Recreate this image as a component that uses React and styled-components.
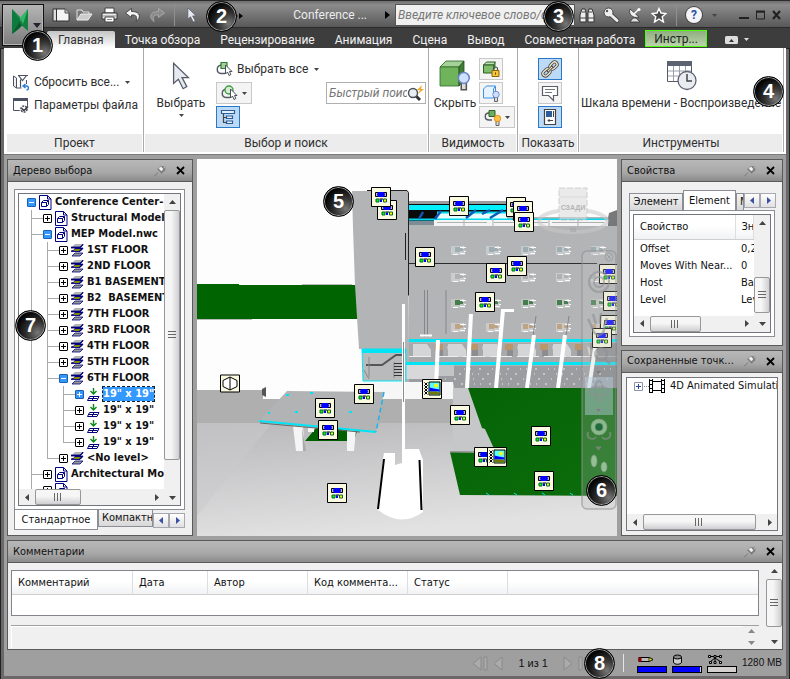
import { useState } from "react";
import styled, { createGlobalStyle, css } from "styled-components";

const UI = `Roboto, "Noto Sans", sans-serif`;
const TAHOMA = `"DejaVu Sans Condensed", "DejaVu Sans", sans-serif`;

/* ---------- small shared parts ---------- */

const Callout = ({ n, ...pos }) => <CalloutDot {...pos}>{n}</CalloutDot>;

const Caret = ({ light }) => (
    <svg width="5" height="3" viewBox="0 0 5 3" aria-hidden="true">
        <path d="M0 0h5L2.500 3z" fill={light ? "#ddd" : "#444"} />
    </svg>
);

const Arrow = ({ dir, color = "#444", label }) => {
    const d = {
        up: "M1 6h7L4.500 2z",
        down: "M1 3h7L4.500 7z",
        left: "M6 1v7L2 4.500z",
        right: "M3 1v7L7 4.500z",
    }[dir];
    return (
        <ArrowBtn type="button" aria-label={label || dir}>
            <svg width="9" height="9" viewBox="0 0 9 9"><path d={d} fill={color} /></svg>
        </ArrowBtn>
    );
};

const VScroll = ({ before, size, after }) => (
    <VTrack>
        <Arrow dir="up" />
        <Gap $grow={before} />
        <VThumb $grow={size}><Grip /></VThumb>
        <Gap $grow={after} />
        <Arrow dir="down" />
    </VTrack>
);

const HScroll = ({ before, size, after }) => (
    <HTrack>
        <Arrow dir="left" />
        <Gap $grow={before} />
        <HThumb $grow={size}><Grip $vertical /></HThumb>
        <Gap $grow={after} />
        <Arrow dir="right" />
    </HTrack>
);

const Panel = ({ title, children }) => (
    <PanelBox>
        <PanelHead>
            <PanelTitle>{title}</PanelTitle>
            <HeadBtn type="button" aria-label="Закрепить">
                <svg width="12" height="12" viewBox="0 0 12 12">
                    <path d="M0 11.500l4-4" stroke="#777" />
                    <path d="M3 4l5 5 1-2 2-1 .5-3.500L10 1 6 1.500 5 3z" fill="#7d7d7d" />
                    <path d="M5 3.500l2-1.500 2 2-1.500 2zM9.500 2l1.500 1" fill="#f4f4f4" stroke="#f4f4f4" strokeWidth=".6" />
                </svg>
            </HeadBtn>
            <HeadBtn type="button" aria-label="Закрыть">
                <svg width="9" height="9" viewBox="0 0 9 9">
                    <path d="M1 1l7 7M8 1L1 8" stroke="#000" strokeWidth="1.800" />
                </svg>
            </HeadBtn>
        </PanelHead>
        {children}
    </PanelBox>
);

/* ---------- title bar icons ---------- */

const LogoIcon = () => (
    <svg width="40" height="40" viewBox="0 0 40 40">
        <path d="M9 4l8 8v11l-8 6z" fill="#0d7a3e" />
        <path d="M9 4l15 20V5l-6 9z" fill="#1e9b50" />
        <path d="M9 29l8-13 3 4z" fill="#0a5c30" />
        <path d="M25 4v22l-8-7 1-6z" fill="#14803f" />
        <path d="M25 4l-8 9 3 6z" fill="#2fb866" />
        <path d="M30 18h8l-4 5z" fill="#223" />
    </svg>
);

const NewIcon = () => (
    <svg width="18" height="14" viewBox="0 0 18 14">
        <path d="M1 1h4v12H1z" fill="#ddd" stroke="#333" />
        <path d="M4.500 1h9l3.500 4v8H4.500z" fill="#f4f4f4" stroke="#333" />
        <path d="M13 1v4h4" fill="#bbb" stroke="#555" />
    </svg>
);
const OpenIcon = () => (
    <svg width="18" height="14" viewBox="0 0 18 14">
        <path d="M1 12V2h5l1 2h6v2" fill="#777" stroke="#e4e4e4" />
        <path d="M1 12l4-6h11l-4 6z" fill="#ccc" stroke="#eee" />
    </svg>
);
const PrintIcon = () => (
    <svg width="17" height="16" viewBox="0 0 17 16">
        <path d="M4 1h9v5H4z" fill="#fff" stroke="#444" />
        <path d="M1 6h15v6H1z" fill="#ececec" stroke="#333" />
        <path d="M2 9h13" stroke="#888" />
        <path d="M4 10h9v5H4z" fill="#fff" stroke="#444" />
        <path d="M6 12.500h5" stroke="#888" />
    </svg>
);
const UndoIcon = ({ flip, dim }) => (
    <svg width="16" height="14" viewBox="0 0 16 14">
        <path
            transform={flip ? "matrix(-1 0 0 1 16 0)" : undefined}
            d="M6.500.500L.5 5l6 4.500V7c5-.5 6 2 4.500 6.500 5-3.500 5-10-4.500-10z"
            fill={dim ? "#8b8b8b" : "#f4f4f4"}
            stroke={dim ? "#b0b0b0" : "#333"}
            strokeWidth=".8"
        />
    </svg>
);
const Pointer = ({ w = 10, h = 16, line = "#555b68" }) => (
    <svg width={w} height={h} viewBox="0 0 17 27">
        <path d="M1.500 1.500v19l4.500-4 4.500 9 3.500-2-4.500-8.500h6z" fill="#e6e9ef" stroke={line} strokeWidth="1.200" />
    </svg>
);
const BinocularsIcon = () => (
    <svg width="16" height="15" viewBox="0 0 16 15">
        <path d="M3 1h3l1 4v9H1V7zM10 1h3l2 6v7H9V5z" fill="#eee" stroke="#333" />
        <path d="M1 10h6M9 10h6M7 6h2M3 4h3M10 4h3" stroke="#444" />
    </svg>
);
const KeyIcon = () => (
    <svg width="17" height="17" viewBox="0 0 17 17">
        <path d="M8 8l6 5.500" stroke="#444" strokeWidth="4.500" strokeLinecap="round" />
        <circle cx="5.500" cy="5.500" r="4.500" fill="#eee" stroke="#444" />
        <path d="M8 8l6 5.500" stroke="#eee" strokeWidth="3" strokeLinecap="round" />
        <circle cx="4" cy="4" r="1.200" fill="#555" />
    </svg>
);
const DishIcon = () => (
    <svg width="16" height="16" viewBox="0 0 16 16">
        <path d="M3 2c-2 5 3 10 9 8z" fill="#eee" stroke="#333" strokeWidth=".8" />
        <path d="M7 7l5-5" stroke="#fff" strokeWidth="1.500" />
        <circle cx="12" cy="2.500" r="1.500" fill="#fff" />
        <path d="M6 11l-3 4h10l-4-4z" fill="#ddd" stroke="#333" strokeWidth=".8" />
    </svg>
);
const StarIcon = () => (
    <svg width="16" height="16" viewBox="0 0 16 16">
        <path d="M8 1.500l2 4.500 5 .5-3.800 3.200L12.500 15 8 12l-4.500 3 1.300-5.300L1 6.500 6 6z" fill="#4a4a4a" stroke="#fff" strokeWidth="1.400" />
    </svg>
);

/* ---------- ribbon icons ---------- */

const ResetIcon = () => (
    <svg width="18" height="17" viewBox="0 0 18 17">
        <path d="M1.500 2v10l3 2V4zM4.500 14h5M14.500 6v4" fill="#eef0f4" stroke="#4a5160" />
        <path d="M6.500 1.500l4 5 4-5M6 1.500h10M8.500 5.500v8" fill="none" stroke="#4a5160" strokeWidth="1.200" />
        <path d="M13.500 10l-2.500 2 2.500 2M11.500 12h3c2.500 0 2.500 4 0 4" fill="none" stroke="#2a7fd4" strokeWidth="1.400" />
    </svg>
);
const FileOptIcon = () => (
    <svg width="18" height="17" viewBox="0 0 18 17">
        <path d="M1.500 1.500h14v12h-14z" fill="#fff" stroke="#4a5160" />
        <path d="M1 1h15v3H1z" fill="#4a5160" />
        <circle cx="12" cy="12" r="4.500" fill="#fff" />
        <circle cx="12" cy="12" r="3" fill="#fff" stroke="#4a5160" strokeWidth="1.600" strokeDasharray="2 1" />
        <path d="M10 11.500l2 2 4-4" fill="none" stroke="#333" strokeWidth="1.400" />
    </svg>
);
const PickIcon = ({ round }) => (
    <svg width="17" height="16" viewBox="0 0 17 16">
        <path d="M5 4C0 5 0 12 5 12.500h4" fill="none" stroke="#555b66" strokeWidth="1.400" />
        {round
            ? <circle cx="8" cy="5" r="4" fill="#d8ecd0" stroke="#3f9a48" strokeWidth="1.400" />
            : <path d="M5 1.500h6v6H5z" fill="#a5cf95" stroke="#2d7a32" strokeWidth="1.200" />}
        <path d="M9.500 4v9l2-2 1.500 3.500 1.800-1-1.300-3H16z" fill="#fff" stroke="#3a3f4a" strokeWidth=".9" />
    </svg>
);
const TreeIcon = () => (
    <svg width="16" height="16" viewBox="0 0 16 16">
        <path d="M1.500 1.500h13v3h-13zM6.500 7h6v2.500h-6zM6.500 12h6v2.500h-6z" fill="#e4f0fc" stroke="#2a5d99" strokeWidth="1.200" />
        <path d="M3.500 5v8.500h3M3.500 8.500h3" fill="none" stroke="#444" strokeWidth="1.200" />
    </svg>
);
const Bulb = ({ x, y, s = 1, fill = "#cfe0ff", stroke = "#6a86c4" }) => (
    <g transform={`translate(${x} ${y}) scale(${s})`}>
        <path d="M2.500 6h3v4.500h-3z" fill="#ddd" stroke="#555" strokeWidth=".9" />
        <circle cx="4" cy="3.500" r="3.200" fill={fill} stroke={stroke} strokeWidth=".9" />
    </g>
);
const HideIcon = () => (
    <svg width="32" height="32" viewBox="0 0 32 32">
        <path d="M1 7l6-6h18l-5 6z" fill="#a4d195" stroke="#2c5f26" strokeWidth=".8" />
        <path d="M1 7h19v19H1z" fill="#6fb35b" stroke="#2f6a2a" strokeWidth=".8" />
        <path d="M20 7l5-6v19l-5 6z" fill="#3f7e34" stroke="#234f1e" strokeWidth=".8" />
        <Bulb x={18} y={12} s={1.7} />
    </svg>
);
const LockCubeIcon = () => (
    <svg width="18" height="17" viewBox="0 0 18 17">
        <path d="M1.500 4l3-3h9l-2 3z" fill="#bfe0b4" stroke="#2c5f26" />
        <path d="M1.500 4h10v8h-10z" fill="#7fbd6c" stroke="#2c5f26" />
        <path d="M11.500 4l2-3v6l-2 3z" fill="#3f7e34" />
        <path d="M11.500 9V7.500c0-2 4-2 4 0V9" fill="none" stroke="#555" strokeWidth="1.200" />
        <path d="M10 9.500h7v6h-7z" fill="#f4c536" stroke="#8a6510" />
        <path d="M13.500 11.500v2" stroke="#5a3f00" />
    </svg>
);
const GhostCubeIcon = () => (
    <svg width="18" height="17" viewBox="0 0 18 17">
        <path d="M1.500 4l3-3h9l-2 3v9h-10zM13.500 1v6" fill="#e6f2fd" stroke="#3a93e0" />
        <Bulb x={10} y={6} />
    </svg>
);
const ShowAllIcon = () => (
    <svg width="18" height="17" viewBox="0 0 18 17">
        <path d="M5 4C0 4 0 11 5 11h3" fill="none" stroke="#555b66" strokeWidth="1.400" />
        <path d="M5 1.500h6v6H5z" fill="#6fae5e" stroke="#2c5f26" />
        <Bulb x={9.500} y={6} fill="#ffc445" stroke="#e58a12" />
    </svg>
);
const LinkIcon = () => (
    <svg width="18" height="18" viewBox="0 0 18 18">
        <g transform="rotate(-45 9 9)" fill="none">
            <g stroke="#444" strokeWidth="3">
                <rect x="0" y="6.500" width="8" height="5" rx="2.500" />
                <rect x="10" y="6.500" width="8" height="5" rx="2.500" />
            </g>
            <g stroke="#f0e6c8" strokeWidth="1.400">
                <rect x="0" y="6.500" width="8" height="5" rx="2.500" />
                <rect x="10" y="6.500" width="8" height="5" rx="2.500" />
            </g>
            <path d="M5 9h8" stroke="#444" strokeWidth="2.500" />
            <path d="M6 9h6" stroke="#f0e6c8" />
        </g>
    </svg>
);
const NoteIcon = () => (
    <svg width="18" height="17" viewBox="0 0 18 17">
        <path d="M1.500 1.500h15v9h-4v5l-5-5h-6z" fill="#fff" stroke="#5a5f68" strokeWidth="1.200" />
        <path d="M4 4.500h10M4 7.500h7" stroke="#777" />
    </svg>
);
const PropsIcon = () => (
    <svg width="16" height="18" viewBox="0 0 16 18">
        <path d="M2.500 1.500h11v15h-11z" fill="#fff" stroke="#444" strokeWidth="1.200" />
        <path d="M4 3h6v6H4z" fill="#2a5d99" />
        <path d="M11.500 3v6M6 12.500h5M7.500 11L6 12.500 7.500 14" fill="none" stroke="#444" />
    </svg>
);
const TimelineIcon = () => (
    <svg width="32" height="32" viewBox="0 0 32 32">
        <path d="M2.500 2.500h24v19h-24z" fill="#fff" stroke="#555b66" />
        <path d="M2 1h25v5H2z" fill="#5c6270" />
        <path d="M3 11h23M3 16h23M8.500 6v15M14.500 6v15M20.500 6v15" stroke="#9aa0aa" />
        <circle cx="22" cy="20.500" r="9" fill="#e9edf2" stroke="#5c6270" strokeWidth="1.300" />
        <path d="M22 14v7h5" fill="none" stroke="#444" strokeWidth="1.500" />
    </svg>
);
const SearchIcon = () => (
    <svg width="18" height="17" viewBox="0 0 18 17">
        <path d="M9 11l4 4" stroke="#333" strokeWidth="3" />
        <circle cx="6" cy="8" r="4.500" fill="#e8eef4" stroke="#4a4f58" strokeWidth="1.400" />
        <path d="M15 0l-5 5h3l-2 4 6-5h-3z" fill="#f5a623" />
    </svg>
);

/* ---------- selection tree ---------- */

const ModelIcon = () => (
    <svg width="13" height="15" viewBox="0 0 13 15">
        <path d="M.5.500h8l3.500 3.500v10.500H.5z" fill="#fff" stroke="#000080" />
        <path d="M8.500.500V4H12" fill="none" stroke="#000080" />
        <path d="M2.500 7.500h5v4h-5zM2.500 7.500l2-2h5v4l-2 2M7.500 7.500l2-2" fill="none" stroke="#000080" />
    </svg>
);
const LayerIcon = () => (
    <svg width="13" height="14" viewBox="0 0 13 14">
        <path d="M4 1h8L9 4H1z" fill="#b5b5b5" />
        <path d="M0 4h9l3-3v1L9 5H0zM0 8h9l3-3H4v1M0 8.500h9l3-3" fill="#000080" stroke="#000080" strokeWidth=".8" />
        <path d="M4 6h6L8 8H2z" fill="#8a8a00" />
        <path d="M4 10h8l-3 3H1z" fill="#999" stroke="#000080" strokeWidth=".8" />
    </svg>
);
const TerminalIcon = () => (
    <svg width="13" height="15" viewBox="0 0 13 15">
        <path d="M6.500 1v6M3.500 4l3 3 3-3" fill="none" stroke="#0a8a1a" strokeWidth="1.400" />
        <path d="M.5 13.500l2-4h9.500l-2 4zM1.500 11.500h9M7 9.500l-2 4" fill="none" stroke="#000080" />
    </svg>
);
const kinds = { model: ModelIcon, layer: LayerIcon, terminal: TerminalIcon };

const floor = (name) => ({ name, kind: "layer" });
const treeData = [
    {
        name: "Conference Center-", kind: "model", open: true, children: [
            { name: "Structural Model", kind: "model" },
            {
                name: "MEP Model.nwc", kind: "model", open: true, children: [
                    floor("1ST FLOOR"), floor("2ND FLOOR"), floor("B1 BASEMENT"), floor("B2  BASEMENT"),
                    floor("7TH FLOOR"), floor("3RD FLOOR"), floor("4TH FLOOR"), floor("5TH FLOOR"),
                    {
                        name: "6TH FLOOR", kind: "layer", open: true, children: [
                            { name: '19" x 19"', kind: "terminal", selected: true },
                            { name: '19" x 19"', kind: "terminal" },
                            { name: '19" x 19"', kind: "terminal" },
                            { name: '19" x 19"', kind: "terminal" },
                        ],
                    },
                    floor("<No level>"),
                ],
            },
            { name: "Architectural Mo", kind: "model" },
            { name: "", kind: "model" },
        ],
    },
];

const TreeNode = ({ node }) => {
    const Icon = kinds[node.kind];
    const [open, setOpen] = useState(!!node.open);
    return (
        <Item>
            <Row>
                <Expander
                    type="button"
                    aria-label={open ? "Свернуть" : "Развернуть"}
                    $blue={open || node.selected}
                    onClick={() => setOpen(!open)}
                >
                    <svg width="7" height="7" viewBox="0 0 7 7">
                        <path d={open ? "M1 3.500h5" : "M1 3.500h5M3.500 1v5"} stroke={open || node.selected ? "#fff" : "#000"} />
                    </svg>
                </Expander>
                <Icon />
                <Label $selected={node.selected}>{node.name}</Label>
            </Row>
            {open && node.children && (
                <Branch>{node.children.map((c, i) => <TreeNode key={i} node={c} />)}</Branch>
            )}
        </Item>
    );
};

/* ---------- 3D view ---------- */

const Marker = ({ x, y }) => (
    <g transform={`translate(${x - 9.5} ${y - 9.5})`}>
        <path d="M0 0h19v19H0z" fill="#fafae0" stroke="#000" />
        <path d="M4 5h11v4H4z" fill="#b8b8c8" stroke="#000" />
        <path d="M6.500 4.500h6l1 2.500-1 2.500h-6l-1-2.500z" fill="#00f" />
        <path d="M8.500 12h2v2.500h-2z" fill="#00f" />
        <path d="M8 11.500h3.500" stroke="#000" />
        <path d="M4.500 11.500h3v3h-3z" fill="#0f0" stroke="#063" />
        <path d="M12 11.500h3v3h-3z" fill="#ff0" stroke="#063" />
    </g>
);
const ViewMarker = ({ x, y }) => (
    <g transform={`translate(${x - 9.5} ${y - 9.5})`}>
        <path d="M0 0h19v19H0z" fill="#fafae0" stroke="#000" />
        <path d="M2 3l3 3-3 3 3 3-3 3M5 3L2 6l3 3-3 3 3 3" fill="none" stroke="#000" />
        <path d="M6.500 2.500h11v13h-11z" fill="#5ff" stroke="#000" />
        <path d="M7 8l4 1 6 1v2H7z" fill="#00f" />
        <path d="M7 12h7l3 1v2H7z" fill="#770" />
        <circle cx="13.500" cy="6" r="2" fill="#ff0" />
    </g>
);

const markers = [
    [387, 210], [381, 197], [459, 206], [516, 207], [523, 211], [524, 222], [425, 257], [517, 266],
    [496, 273], [485, 302], [609, 274], [613, 301], [610, 325], [602, 338], [364, 394], [325, 408],
    [328, 430], [460, 415], [541, 436], [484, 457], [544, 481], [337, 493],
];
const mullions = [[438, 436, 340], [471, 467, 314], [503, 496, 310], [534, 527, 335], [565, 558, 335], [597, 589, 335]];
const windowRows = [
    { y: 246, fill: "#cdd1d3", tint: "#8fa3a8" },
    { y: 273, fill: "#d2d4d4", tint: "#a4a8aa" },
    { y: 299, fill: "#c6cac6", tint: "#1c6428" },
    { y: 323, fill: "#cfcfcf", tint: "#b9966c" },
];
const windowCols = [451, 486, 521, 556, 591];

const Scene = () => (
    <SceneSvg viewBox="197 159 420 377" preserveAspectRatio="xMinYMin slice" role="img" aria-label="Conference Center">
        <defs>
            <linearGradient id="ground" x1="0" y1="0" x2="0.300" y2="1">
                <stop offset="0" stopColor="#b8b8ba" />
                <stop offset="1" stopColor="#e2e2e3" />
            </linearGradient>
            <linearGradient id="lawn" x1="0" y1="0" x2="1" y2="1">
                <stop offset="0" stopColor="#056305" />
                <stop offset="1" stopColor="#0c6d0c" />
            </linearGradient>
        </defs>
        <path d="M197 159h420v377H197z" fill="#fdfdfd" />
        <path d="M197 422h420v114H197z" fill="url(#ground)" />
        <path d="M197 390h66v9h190v24H197z" fill="#afafaf" />
        <path d="M197 516l75-93h-75z" fill="#c9c9cb" opacity=".5" />
        <path d="M262 389l4-2v10l-4-2z" fill="#555" />
        <path d="M197 284h42v1h117l2 34H197z" fill="#006400" />
        <path d="M197 319.500h55M302 284.500h50" stroke="#bbb" />

        {/* building wall */}
        <path d="M409 201h208v187H404V340h5z" fill="#b3b4b6" />
        <path d="M506 200h111v17H506z" fill="#fdfdfd" />
        <path d="M608 218l1-5 8-3v16h-10z" fill="#77787a" />
        <path d="M409 203h97v22h-97z" fill="#0a0a0a" />
        <path d="M409 201h97v3h-97z" fill="#9a9b9d" />
        <path d="M409 205h105v5H409z" fill="#00f0ff" />
        <path d="M437 213h70v6h-70z" fill="#e8fbff" />
        <path d="M437 212.500h70M409 219.500h198" stroke="#00d8ee" strokeWidth="2" />
        <path d="M419 219l4-7M435 219l6-8M466 218l10-8M482 214l8-4M490 218l13-8M514 218v8" fill="none" stroke="#0a5cb8" strokeWidth="2.500" />
        <path d="M409 221h25v4h-25z" fill="#7e8c96" />
        <path d="M434 220h174v6H434z" fill="#f4f4f4" />
        <path d="M437 222.500h50M494 222.500h54M552 222.500h52M464 219v7M493 219v7M549 219v7M578 219v7" stroke="#b0b0b0" />
        <path d="M409 263.500h188" stroke="#2b2b2b" />
        {windowRows.map((r, j) => windowCols.map((x, i) => (
            <g key={`${j}-${i}`}>
                <path d={`M${x} ${r.y}h11v4h3v5h-14z`} fill={r.fill} opacity=".8" />
                <path d={`M${x + 4 - i} ${r.y + 1}h5v5h-5zM${x + 8} ${r.y + 2}h4v3h-4z`} fill={r.tint} opacity=".75" />
                <path
                    d={`M${x + 2} ${r.y + 8.5}h5M${x + 9} ${r.y + 7.5}h5M${x + 12} ${r.y}v3M${x + 9} ${r.y + 1.5}h6M${x + 13} ${r.y + 5.5}h2`}
                    stroke="#fbfbfb"
                />
            </g>
        )))}
        <path d="M424.500 290v47M427.500 290v47M446 290v44M536 316l-3 20M569 316l-3 20" stroke="#85868a" />
        <path d="M420 335.500h12" stroke="#fff" strokeWidth="2" />
        <path d="M501 309h13v3h-13z" fill="#fff" />

        {/* curtain wall */}
        <path d="M409 343h208v20H409z" fill="#a8a9ab" />
        {windowCols.map((x) => (
            <g key={x}>
                <path d={`M${x - 38} 344h14l4 6v7h-18z`} fill="#d4d5d6" />
                <path d={`M${x - 16} 344h8v6h-8z`} fill="#b9966c" />
                <path d={`M${x - 14} 350h6v6h-6z`} fill="#8c8d90" />
                <path d={`M${x - 4} 346l12 9h-10z`} fill="#dcd6c4" />
            </g>
        ))}
        <path d="M409 356.500h208" stroke="#eee" strokeDasharray="22 5" />
        <path d="M409 366h208v22H409z" fill="#9c9da0" />
        <path d="M590 343h27v45h-27z" fill="#6e6f72" opacity=".5" />
        <path d="M442 369h170M450 374h160M445 379h165M452 384h160" stroke="#eee" strokeDasharray="1 8 2 11 1 5" />
        <path d="M409 339h208v3H409zM404 362h213v3H404z" fill="#00e5f5" />
        <path d="M405 365h31v14h-31z" fill="#d8d8da" />
        <path d="M436 365h18v11h-18z" fill="#c2c3c5" />

        {/* tower with the stairs */}
        <path d="M352 191h56l1 158h-50l-4-64-2-57z" fill="#b3b4b6" />
        <path d="M367 190.500h40l1.500 2v103M405.500 233v27" fill="none" stroke="#222" />
        <path d="M362 349h44v32h-43z" fill="#b9babb" stroke="#00e5f5" />
        <path d="M362 349h44v4h-44z" fill="#00e5f5" />
        <path d="M366 365h16l14-10h9" fill="none" stroke="#555" strokeWidth="2" />
        <path d="M364 370l5 9M369 357v20M394 362v16" stroke="#888" />
        <path d="M394 363.500h8M394 366.500h8M394 369.500h8M394 372.500h8M394 375.500h8" stroke="#333" />
        <path d="M363 382h90l2 17h-92z" fill="#f6f6f7" />
        <path d="M453 388h15l17 42 12 24h-44z" fill="#c6c7c9" />
        {mullions.map(([a, b, top]) => (
            <path key={a} d={`M${a} ${top}L${b} 388`} stroke="#fff" strokeWidth="4" />
        ))}

        {/* lawns */}
        <path d="M468 388h149v108l-157-1-10-43 46 1-11-24-3-1z" fill="url(#lawn)" />
        <path d="M450 451h25v1.500h-25z" fill="#999" />
        <path d="M486 493l3 2M514 493l3 2M542 493l3 2M570 493l3 2" stroke="#00e5f5" />
        <path d="M316 428h42l-4 13h-49z" fill="#005f00" />

        {/* canopy */}
        <path d="M293 426h10l2 25h-9zM347 430h9l-2 21h-7zM308 428h6v4h-6z" fill="#f5f5f5" />
        <path d="M302 427l4 24h-3z" fill="#aaa" />
        <path d="M287 391l97 1-8 40-117-11z" fill="#b2b3b5" />
        <path d="M259 421l117 11" stroke="#00e5f5" strokeWidth="2" />
        <path d="M260 423l100 9" stroke="#666" />
        <path d="M384 392l-8 40" stroke="#1ab5e8" strokeWidth="1.500" strokeDasharray="5 3" />
        <path d="M286 395h3M310 393h3M268 413h2M295 412h3M349 412h3" stroke="#00e5f5" strokeWidth="2" />

        {/* statue */}
        <path d="M384 453h11v12l7-2V304h3v145h14l4 11v52q-22 16-45-2l5-51z" fill="#fff" />
        <path d="M384 459l-6 50M419.500 460l2 50" stroke="#000" strokeWidth="2" />
        <path d="M403.500 342v60" stroke="#8b8b8b" />

        {/* view cube */}
        <g opacity=".55">
            <ellipse cx="573" cy="221" rx="34" ry="11" fill="none" stroke="#c9c9c9" strokeWidth="4" />
            <path d="M559 188h28v32h-28z" fill="#dcdcde" stroke="#aaa" strokeDasharray="6 2" />
            <path d="M559 197h28" stroke="#bbb" />
            <text x="573" y="210" textAnchor="middle" fontFamily="Liberation Sans" fontWeight="700" fontSize="7" fill="#777">СЗАДИ</text>
            <text x="573" y="232" textAnchor="middle" fontFamily="Liberation Sans" fontWeight="700" fontSize="6" fill="#999">Ю</text>
        </g>

        {markers.map(([x, y]) => <Marker key={`${x}.${y}`} x={x} y={y} />)}
        <ViewMarker x={432} y={389} />
        <ViewMarker x={497} y={457} />
        <g transform="translate(220.500 375)">
            <path d="M0 0h19v17H0z" fill="#fafae0" stroke="#000" />
            <path d="M9.500 2l7 3.500v6l-7 3.500-7-3.500v-6z" fill="#fff" stroke="#000" />
            <path d="M9.500 2v13" stroke="#000" />
        </g>

        {/* navigation bar */}
        <g fill="none" stroke="#8e8f92" strokeOpacity=".6">
            <rect x="582" y="251" width="34" height="258" rx="5" fill="#c4c4c4" fillOpacity=".25" strokeWidth="1.500" />
            <path d="M585 377h28v38h-28z" fill="#b8cfe0" fillOpacity=".45" stroke="none" />
            <circle cx="609" cy="257" r="4" />
            <path d="M607 255l4 4M611 255l-4 4" />
            <circle cx="599" cy="282" r="10" strokeWidth="2" />
            <circle cx="599" cy="282" r="5" strokeWidth="2" />
            <path d="M592 327l-4-8M596 324l-3-10M600 324l1-11M604 326l3-8M592 327c2 12 14 9 12-1" strokeWidth="2.500" />
            <circle cx="601" cy="354" r="6" strokeWidth="2" />
            <path d="M605 359l5 5" strokeWidth="3" />
            <ellipse cx="599" cy="391" rx="10" ry="4" strokeWidth="2" />
            <ellipse cx="599" cy="391" rx="4" ry="10" strokeWidth="2" />
            <circle cx="599" cy="427" r="8" fill="#a9d4a9" fillOpacity=".7" />
            <circle cx="599" cy="427" r="4" fill="#1f6b3a" />
            <path d="M588 432c-2 8 6 8 8 5M610 432c2 8-6 8-8 5" strokeWidth="2" />
            <ellipse cx="594" cy="461" rx="3" ry="6" fill="#a9cfa9" fillOpacity=".8" />
            <ellipse cx="604" cy="467" rx="3" ry="5" fill="#a9cfa9" fillOpacity=".8" />
            <path d="M596 371h5l-2.500 3zM596 409h5l-2.500 3zM596 447h5l-2.500 3z" fill="#777" />
        </g>
    </SceneSvg>
);

/* ---------- page ---------- */

const tabs = ["Главная", "Точка обзора", "Рецензирование", "Анимация", "Сцена", "Вывод", "Совместная работа"];
const properties = [["Offset", "0,2"], ["Moves With Near...", "0"], ["Host", "Ba"], ["Level", "Lev"]];

const Header = () => (
    <Top>
        <AppButton type="button" aria-label="Меню приложения"><LogoIcon /></AppButton>
        <TitleBar>
            <ToolBtn type="button" aria-label="Создать"><NewIcon /></ToolBtn>
            <ToolBtn type="button" aria-label="Открыть"><OpenIcon /></ToolBtn>
            <ToolBtn type="button" aria-label="Печать"><PrintIcon /></ToolBtn>
            <ToolBtn type="button" aria-label="Отменить"><UndoIcon /></ToolBtn>
            <ToolBtn type="button" aria-label="Повторить"><UndoIcon flip dim /></ToolBtn>
            <Divider />
            <ToolBtn type="button" aria-label="Выбрать"><Pointer /></ToolBtn>
            <More type="button" aria-label="Ещё">
                <svg width="9" height="6" viewBox="0 0 9 6"><path d="M0 0l4 3-4 3zM5 0l4 3-4 3z" /></svg>
            </More>
            <DocTitle>Conference ...</DocTitle>
            <svg width="5" height="8" viewBox="0 0 5 8" aria-hidden="true"><path d="M0 0l5 4-5 4z" /></svg>
            <HelpSearch aria-label="Поиск по справке" placeholder="Введите ключевое слово/фр" />
            <ToolBtn type="button" aria-label="Поиск"><BinocularsIcon /></ToolBtn>
            <ToolBtn type="button" aria-label="Подписка"><KeyIcon /></ToolBtn>
            <ToolBtn type="button" aria-label="Центр связи"><DishIcon /></ToolBtn>
            <ToolBtn type="button" aria-label="Избранное"><StarIcon /></ToolBtn>
            <Divider />
            <HelpBtn type="button">?</HelpBtn>
            <Caret />
            <WindowBtns>
                <button type="button" aria-label="Свернуть">
                    <svg width="10" height="10" viewBox="0 0 10 10"><path d="M0 8h10" stroke="#222" strokeWidth="2" /></svg>
                </button>
                <button type="button" aria-label="Развернуть">
                    <svg width="9" height="10" viewBox="0 0 9 10"><path d="M.5 2h8v7h-8z" fill="none" stroke="#222" /><path d="M0 1.500h9" stroke="#222" strokeWidth="2" /></svg>
                </button>
                <button type="button" aria-label="Закрыть">
                    <svg width="9" height="10" viewBox="0 0 9 10"><path d="M1 1l7 8M8 1L1 9" stroke="#222" strokeWidth="2.200" /></svg>
                </button>
            </WindowBtns>
        </TitleBar>
        <TabRow>
            {tabs.map((t, i) => <Tab key={t} type="button" $active={i === 0}>{t}</Tab>)}
            <ContextTab type="button">Инстр...</ContextTab>
            <Collapse type="button" aria-label="Свернуть ленту">
                <svg width="13" height="8" viewBox="0 0 13 8">
                    <rect width="13" height="8" rx="1.500" fill="#ddd" />
                    <path d="M4 6h5L6.500 3z" fill="#333" />
                </svg>
                <Caret light />
            </Collapse>
        </TabRow>
        <Callout n="1" $left={22} $top={30} />
        <Callout n="2" $left={206} $top={1} />
        <Callout n="3" $right={216} $top={1} />
    </Top>
);

const RibbonBar = () => (
    <Ribbon>
        <Group $width={138}>
            <GroupBody>
                <Stack $tight>
                    <LineBtn type="button"><ResetIcon />Сбросить все...<Caret /></LineBtn>
                    <LineBtn type="button"><FileOptIcon />Параметры файла</LineBtn>
                </Stack>
            </GroupBody>
            <GroupName>Проект</GroupName>
        </Group>
        <Group $width={285}>
            <GroupBody>
                <BigBtn type="button" $width={62}>
                    <Pointer w={18} h={28} />
                    <span>Выбрать</span>
                    <Caret />
                </BigBtn>
                <Stack>
                    <LineBtn type="button"><PickIcon />Выбрать все<Caret /></LineBtn>
                    <IconBtn type="button" aria-label="Рамка выбора" $split><PickIcon round /><Caret /></IconBtn>
                    <IconBtn type="button" aria-label="Дерево выбора" $on><TreeIcon /></IconBtn>
                </Stack>
                <QuickFind>
                    <input aria-label="Быстрый поиск" placeholder="Быстрый поиск" />
                    <button type="button" aria-label="Найти"><SearchIcon /></button>
                </QuickFind>
            </GroupBody>
            <GroupName>Выбор и поиск</GroupName>
        </Group>
        <Group $width={89}>
            <GroupBody>
                <BigBtn type="button" $width={40}>
                    <HideIcon />
                    <span>Скрыть</span>
                </BigBtn>
                <Stack>
                    <IconBtn type="button" aria-label="Сделать обязательным"><LockCubeIcon /></IconBtn>
                    <IconBtn type="button" aria-label="Скрыть невыбранное"><GhostCubeIcon /></IconBtn>
                    <IconBtn type="button" aria-label="Показать все" $split><ShowAllIcon /><Caret /></IconBtn>
                </Stack>
            </GroupBody>
            <GroupName>Видимость</GroupName>
        </Group>
        <Group $width={61}>
            <GroupBody $center>
                <Stack>
                    <IconBtn type="button" aria-label="Ссылки" $on><LinkIcon /></IconBtn>
                    <IconBtn type="button" aria-label="Быстрые свойства"><NoteIcon /></IconBtn>
                    <IconBtn type="button" aria-label="Свойства" $on><PropsIcon /></IconBtn>
                </Stack>
            </GroupBody>
            <GroupName>Показать</GroupName>
        </Group>
        <Group>
            <GroupBody $center>
                <BigBtn type="button">
                    <TimelineIcon />
                    <span>Шкала времени - Воспроизведение</span>
                </BigBtn>
            </GroupBody>
            <GroupName>Инструменты</GroupName>
        </Group>
        <Callout n="4" $right={2} $top={28} />
    </Ribbon>
);

const SelectionTree = () => (
    <Panel title="Дерево выбора">
        <TreePad>
            <Sheet>
                <Well>
                    <WellMain>
                        <WellClip><Tree>{treeData.map((n) => <TreeNode key={n.name} node={n} />)}</Tree></WellClip>
                        <HScroll before={0} size={44} after={66} />
                    </WellMain>
                    <VScroll before={0} size={228} after={27} />
                </Well>
            </Sheet>
            <BottomTabs>
                <SheetTab type="button" $active $bottom $width={84}>Стандартное</SheetTab>
                <SheetTab type="button" $bottom $fill>Компактное</SheetTab>
                <Spin><Arrow dir="left" color="#3c50a0" /><Arrow dir="right" color="#3c50a0" /></Spin>
            </BottomTabs>
        </TreePad>
        <Callout n="7" $left={7} $top={150} />
    </Panel>
);

const Properties = () => (
    <Panel title="Свойства">
        <PropPad>
            <TopTabs>
                <SheetTab type="button" $width={54}>Элемент</SheetTab>
                <SheetTab type="button" $active $width={53}>Element</SheetTab>
                <SheetTab type="button" $fill>M</SheetTab>
                <Spin><Arrow dir="left" color="#3c50a0" /><Arrow dir="right" color="#3c50a0" /></Spin>
            </TopTabs>
            <Sheet>
                <Well>
                    <WellMain>
                        <WellClip>
                            <PropTable>
                                <thead><tr><th>Свойство</th><th>Зн</th></tr></thead>
                                <tbody>
                                    {properties.map(([k, v]) => <tr key={k}><td>{k}</td><td>{v}</td></tr>)}
                                </tbody>
                            </PropTable>
                        </WellClip>
                        <HScroll before={0} size={48} after={37} />
                    </WellMain>
                    <VScroll before={34} size={25} after={2} />
                </Well>
            </Sheet>
        </PropPad>
    </Panel>
);

const SavedViews = () => (
    <Panel title="Сохраненные точк...">
        <ViewsPad>
            <Well>
                <WellMain>
                    <WellClip>
                        <ViewRow>
                            <svg width="43" height="17" viewBox="0 0 43 17" aria-hidden="true">
                                <path d="M7.500 4.500h8v8h-8z" fill="#fff" stroke="#8c96a8" />
                                <path d="M9 8.500h5M11.500 6v5" stroke="#2a4a9a" />
                                <path d="M17 8.500h5" stroke="#888" strokeDasharray="1 1" />
                                <path d="M22.500 1v14M25.500 1v14M34.500 1v14M37.500 1v14M25 3.500h9M25 12.500h9" stroke="#000" />
                                <path d="M22 2.500h4M22 6.500h4M22 10.500h4M22 14.500h4M34 2.500h4M34 6.500h4M34 10.500h4M34 14.500h4" stroke="#000" />
                            </svg>
                            4D Animated Simulation
                        </ViewRow>
                    </WellClip>
                    <HScroll before={0} size={110} after={5} />
                </WellMain>
            </Well>
        </ViewsPad>
    </Panel>
);

const Comments = () => (
    <Panel title="Комментарии">
        <CommentsBody>
            <CommentsMain>
                <CommentTable>
                    <thead>
                        <tr>
                            <th>Комментарий</th><th>Дата</th><th>Автор</th><th>Код коммента...</th><th>Статус</th><th aria-label="Пусто" />
                        </tr>
                    </thead>
                    <tbody><tr><td colSpan={6} /></tr></tbody>
                </CommentTable>
                <CommentText>
                    <textarea readOnly aria-label="Текст комментария" />
                    <MiniSpin><Arrow dir="up" color="#888" /><Arrow dir="down" color="#888" /></MiniSpin>
                </CommentText>
            </CommentsMain>
            <VScroll before={0} size={43} after={6} />
        </CommentsBody>
    </Panel>
);

const StatusBar = () => (
    <Status>
        <PageBtn type="button" aria-label="Первый лист">
            <svg width="16" height="15" viewBox="0 0 16 15"><path d="M9 1v13L1 7.500zM12 1h3v13h-3z" /></svg>
        </PageBtn>
        <PageBtn type="button" aria-label="Предыдущий лист">
            <svg width="10" height="15" viewBox="0 0 10 15"><path d="M9 1v13L1 7.500z" /></svg>
        </PageBtn>
        <PageNo>1 из 1</PageNo>
        <PageBtn type="button" aria-label="Следующий лист">
            <svg width="10" height="15" viewBox="0 0 10 15"><path d="M1 1v13l8-6.500z" /></svg>
        </PageBtn>
        <PageBtn type="button" aria-label="Последний лист">
            <svg width="16" height="15" viewBox="0 0 16 15"><path d="M7 1v13l8-6.500zM1 1h3v13H1z" /></svg>
        </PageBtn>
        <StatusLine />
        <Meter $value={100}>
            <svg width="18" height="12" viewBox="0 0 18 12">
                <path d="M2 3.500h10l4 2-4 2H2z" fill="#bbb" stroke="#000" />
                <path d="M2 3.500h2v4H2z" fill="#e00" stroke="#600" />
                <path d="M12 3.500l4 2-4 2z" fill="#ee0" stroke="#000" strokeWidth=".7" />
            </svg>
            <i />
        </Meter>
        <Meter $value={97}>
            <svg width="12" height="12" viewBox="0 0 12 12">
                <path d="M1.500 3v5c0 3 8 3 8 0V3" fill="#ccc" stroke="#000" />
                <ellipse cx="5.500" cy="3" rx="4" ry="2" fill="#888" stroke="#000" />
            </svg>
            <i />
        </Meter>
        <Meter $value={0}>
            <svg width="18" height="12" viewBox="0 0 18 12">
                <path d="M2 2.500h12M8 3v4M8 4L3 8M8 4l6 4" stroke="#000" fill="none" />
                <path d="M1.500 1.500h2v2h-2zM7 1.500h2v2H7zM12.500 1.500h2v2h-2zM2.500 7.500h2v2h-2zM7 7.500h2v2H7zM12.500 7.500h2v2h-2z" fill="#ccc" stroke="#000" />
            </svg>
            <i />
        </Meter>
        <Memory>1280 MB</Memory>
        <Callout n="8" $right={171} $top={-2} />
    </Status>
);

export default function App() {
    return (
        <>
            <Global />
            <Window>
                <Header />
                <Frame>
                    <RibbonBar />
                    <Dock>
                        <SelectionTree />
                        <Viewport>
                            <Scene />
                            <Callout n="5" $left={126} $top={27} />
                            <Callout n="6" $right={0} $top={316} />
                        </Viewport>
                        <RightDock>
                            <Properties />
                            <SavedViews />
                        </RightDock>
                        <Wide><Comments /></Wide>
                    </Dock>
                    <StatusBar />
                </Frame>
            </Window>
        </>
    );
}

/* ---------- styles ---------- */

const Global = createGlobalStyle`
  * { box-sizing: border-box; }
  body { margin: 0; background: #6a6868; }
  button, input, textarea { font: inherit; color: inherit; }
  button { padding: 0; border: 0; background: none; }
`;

const Window = styled.div`
  display: flex;
  flex-direction: column;
  min-height: 100vh;
  overflow: hidden;
  font: 12px/16px ${UI};
  color: #222;
`;

const Frame = styled.div`
  flex: 1;
  display: flex;
  flex-direction: column;
  border: solid #6a6868;
  border-width: 0 4px 4px;
  outline: 1px solid #222;
  outline-offset: -1px;
  background: #9f9f9f;
`;

const CalloutDot = styled.span`
  position: absolute;
  z-index: 5;
  top: ${(p) => p.$top}px;
  ${(p) => (p.$right !== undefined ? `right: ${p.$right}px;` : `left: ${p.$left}px;`)}
  width: 31px;
  height: 31px;
  border: 1px solid #000;
  border-radius: 50%;
  background: radial-gradient(circle at 75% 75%, #777 0, #333 35%, #050505 70%);
  box-shadow: inset 0 0 0 1px #999;
  color: #fff;
  font: bold 20px/29px "Liberation Sans", sans-serif;
  text-align: center;
`;

const Top = styled.header`
  position: relative;
  display: grid;
  grid-template-columns: 47px minmax(0, 1fr);
  grid-template-rows: 28px 20px;
  background: linear-gradient(#2f2a2e 0 1px, #6e6e6e 1px, #8c8c8c 5px, #585858 27px, #2b2b2b 27px, #2b2b2b 28px, #3d3d3d 28px);
`;

const AppButton = styled.button`
  grid-row: 1 / 3;
  width: 42px;
  height: 42px;
  margin: 4px 0 0 2px;
  border: 1px solid #111;
  box-shadow: inset 0 0 0 1px #b5b5b5;
  background: linear-gradient(#b5b5b5, #7d7d7d);
  overflow: hidden;
`;

const TitleBar = styled.div`
  display: flex;
  align-items: center;
  padding: 2px 9px 0 2px;
`;

const ToolBtn = styled.button`
  flex: none;
  display: grid;
  place-items: center;
  width: 24px;
  height: 22px;
`;

const Divider = styled.span`
  width: 1px;
  height: 22px;
  margin: 0 5px;
  background: #909090;
`;

const More = styled.button`
  margin-left: 30px;
`;

const DocTitle = styled.span`
  flex: 1;
  padding-right: 18px;
  text-align: right;
  color: #ececec;
`;

const HelpSearch = styled.input`
  width: 180px;
  height: 22px;
  margin-left: 5px;
  padding: 0 2px;
  border: 1px solid #555;
  background: #f0f0f0;
  font-style: italic;
  &::placeholder { color: #777; }
`;

const HelpBtn = styled.button`
  width: 16px;
  height: 16px;
  margin: 0 10px 0 4px;
  border-radius: 50%;
  background: #f4f4f8;
  box-shadow: 0 0 0 1px #444;
  color: #1f4fa8;
  font-weight: bold;
  line-height: 14px;
`;

const WindowBtns = styled.div`
  display: flex;
  gap: 7px;
  margin-left: 22px;
  button { display: grid; place-items: center; }
`;

const TabRow = styled.nav`
  display: flex;
  align-items: flex-end;
`;

const Tab = styled.button`
  height: 17px;
  padding: 0 10px;
  color: #f0f0f0;
  line-height: 16px;
  white-space: nowrap;
  ${(p) => p.$active && css`
    padding: 0 11px;
    border-radius: 2px 2px 0 0;
    background: linear-gradient(#c4c4c4, #fff);
    color: #333;
  `}
`;

const ContextTab = styled.button`
  height: 17px;
  margin-bottom: 1px;
  padding: 0 8px;
  border: 1px solid #4dff0a;
  background: linear-gradient(#8fae80, #b9d3aa);
  color: #222;
  line-height: 14px;
`;

const Collapse = styled.button`
  display: flex;
  align-items: center;
  gap: 6px;
  height: 17px;
  margin-left: 18px;
`;

const Ribbon = styled.div`
  position: relative;
  display: flex;
  height: 107px;
  padding: 0 2px 2px;
  border-bottom: 1px solid #7c7c7c;
  background: #fff;
`;

const Group = styled.section`
  flex: ${(p) => (p.$width ? `0 0 ${p.$width}px` : "1")};
  min-width: 0;
  display: flex;
  flex-direction: column;
  padding: 0 1px;
  border-right: 1px solid #aaa;
  color: #2f2f2f;
`;

const GroupBody = styled.div`
  flex: 1;
  display: flex;
  align-items: flex-start;
  justify-content: ${(p) => (p.$center ? "center" : "flex-start")};
  padding: 10px 1px 0 5px;
`;

const GroupName = styled.div`
  height: 18px;
  background: #ececec;
  text-align: center;
  line-height: 18px;
`;

const Stack = styled.div`
  display: flex;
  flex-direction: column;
  align-items: flex-start;
  gap: 2px;
  ${(p) => p.$tight && "padding-top: 13px; gap: 1px;"}
`;

const LineBtn = styled.button`
  display: flex;
  align-items: center;
  gap: 4px;
  height: 22px;
  white-space: nowrap;
  svg { flex: none; }
  svg:last-child:not(:first-child) { margin-left: 2px; }
`;

const IconBtn = styled.button`
  display: flex;
  align-items: center;
  justify-content: space-evenly;
  width: ${(p) => (p.$split ? 36 : 24)}px;
  height: 22px;
  border: 1px solid ${(p) => (p.$on ? "#2a78c8" : "#c8c8c8")};
  background: ${(p) => (p.$on ? "#bcd9f5" : "#f4f4f4")};
`;

const BigBtn = styled.button`
  display: flex;
  flex-direction: column;
  align-items: center;
  gap: 3px;
  width: ${(p) => (p.$width ? `${p.$width}px` : "auto")};
  margin-right: 4px;
  padding-top: 2px;
  white-space: nowrap;
  svg:first-child { height: 32px; }
`;

const QuickFind = styled.div`
  display: flex;
  align-items: center;
  width: 100px;
  height: 22px;
  margin: 24px 0 0 auto;
  border: 1px solid #b0b0b0;
  background: #fff;
  input {
    flex: 1;
    min-width: 0;
    padding: 0 0 0 2px;
    border: 0;
    outline: 0;
    background: none;
    font-style: italic;
  }
  button { display: grid; }
`;

const Dock = styled.main`
  flex: 1;
  display: grid;
  grid-template-columns: 186px minmax(0, 1fr) 162px;
  grid-template-rows: minmax(0, 1fr) 110px;
  gap: 4px;
  padding: 4px 3px 0;
  font: 11px/16px ${TAHOMA};
  color: #111;
`;

const Wide = styled.div`
  grid-column: 1 / -1;
  display: grid;
`;

const RightDock = styled.div`
  display: grid;
  grid-template-rows: 1fr 1fr;
  gap: 4px;
  min-height: 0;
`;

const Viewport = styled.div`
  position: relative;
  display: grid;
  min-height: 0;
  overflow: hidden;
`;

const SceneSvg = styled.svg`
  display: block;
  width: 100%;
  height: 100%;
`;

const PanelBox = styled.section`
  position: relative;
  display: flex;
  flex-direction: column;
  min-width: 0;
  min-height: 0;
  border: 1px solid #5a5a5a;
  background: #f0f0f0;
`;

const PanelHead = styled.header`
  flex: none;
  display: flex;
  align-items: center;
  gap: 10px;
  height: 22px;
  padding: 0 7px 0 5px;
  border-bottom: 1px solid #5a5a5a;
  background: linear-gradient(#b8b8b8, #a8a8a8 60%, #8a8a8a);
`;

const PanelTitle = styled.h2`
  flex: 1;
  margin: 0;
  font: inherit;
  white-space: nowrap;
`;

const HeadBtn = styled.button`
  display: grid;
`;

const TreePad = styled.div`
  flex: 1;
  display: flex;
  flex-direction: column;
  min-height: 0;
  padding: 7px 7px 5px 6px;
`;

const Sheet = styled.div`
  flex: 1;
  display: flex;
  min-height: 0;
  padding: 3px;
  border: 1px solid #8c8e96;
  background: #fff;
`;

const Well = styled.div`
  flex: 1;
  display: flex;
  min-width: 0;
  min-height: 0;
  border: 1px solid #73757c;
  background: #fff;
`;

const WellMain = styled.div`
  flex: 1;
  display: flex;
  flex-direction: column;
  min-width: 0;
  min-height: 0;
`;

const WellClip = styled.div`
  flex: 1 1 0;
  min-height: 0;
  overflow: hidden;
`;

const Tree = styled.ul`
  margin: 0;
  padding: 0 0 0 8px;
  list-style: none;
  font-weight: bold;
`;

const Branch = styled.ul`
  margin: 0;
  padding: 0 0 0 16px;
  list-style: none;
  > li::before, > li::after {
    content: "";
    position: absolute;
    left: -12px;
    top: 0;
  }
  > li::before {
    top: 8px;
    width: 12px;
    border-top: 1px solid #aaa;
  }
  > li::after {
    height: 100%;
    border-left: 1px solid #aaa;
  }
  > li:last-child::after { height: 8px; }
`;

const Item = styled.li`
  position: relative;
`;

const Row = styled.div`
  display: flex;
  align-items: center;
  gap: 3px;
  height: 16px;
  white-space: pre;
  > svg { flex: none; }
`;

const Expander = styled.button`
  flex: none;
  display: grid;
  place-items: center;
  width: 9px;
  height: 9px;
  border: 1px solid ${(p) => (p.$blue ? "#1a5fb4" : "#000")};
  border-radius: 1px;
  background: ${(p) => (p.$blue ? "#3399ff" : "#fff")};
`;

const Label = styled.span`
  line-height: 14px;
  ${(p) => p.$selected && "outline: 1px dashed #123; background: #3399ff; color: #fff;"}
`;

const BottomTabs = styled.div`
  display: flex;
  align-items: flex-start;
  height: 20px;
`;

const TopTabs = styled.div`
  display: flex;
  align-items: flex-end;
  height: 20px;
`;

const SheetTab = styled.button`
  flex: ${(p) => (p.$fill ? "1 1 0" : `0 0 ${p.$width}px`)};
  min-width: 0;
  height: ${(p) => (p.$active ? 20 : 17)}px;
  padding: 0 3px;
  border: 1px solid #8c8e96;
  ${(p) => (p.$bottom ? "border-top: 0;" : "border-bottom: 0;")}
  background: ${(p) => (p.$active ? "#fff" : "linear-gradient(#f4f4f4, #d8d8d8)")};
  overflow: hidden;
  text-align: ${(p) => (p.$fill ? "left" : "center")};
  white-space: nowrap;
`;

const Spin = styled.div`
  flex: none;
  align-self: center;
  display: flex;
  button {
    width: 16px;
    height: 15px;
    border: 1px solid #a8a8b0;
    background: linear-gradient(#fff, #e0e0e4);
  }
`;

const ArrowBtn = styled.button`
  flex: none;
  display: grid;
  place-items: center;
  width: 16px;
  height: 16px;
`;

const VTrack = styled.div`
  flex: none;
  display: flex;
  flex-direction: column;
  width: 16px;
  background: #f0f0f0;
`;

const HTrack = styled.div`
  flex: none;
  display: flex;
  height: 16px;
  background: #f0f0f0;
`;

const Gap = styled.span`
  flex: ${(p) => p.$grow} 1 0;
`;

const thumb = css`
  flex: ${(p) => p.$grow} 1 0;
  display: grid;
  place-items: center;
  border: 1px solid #979797;
  border-radius: 2px;
`;

const VThumb = styled.span`
  ${thumb}
  background: linear-gradient(90deg, #f6f6f6 45%, #cfcfd2);
`;

const HThumb = styled.span`
  ${thumb}
  background: linear-gradient(#f6f6f6 45%, #cfcfd2);
`;

const Grip = styled.i`
  width: 8px;
  height: 8px;
  background: repeating-linear-gradient(${(p) => (p.$vertical ? "90deg" : "180deg")}, #666 0 1px, transparent 1px 3px);
`;

const PropPad = styled.div`
  flex: 1;
  display: flex;
  flex-direction: column;
  min-height: 0;
  padding: 8px 7px 8px 7px;
`;

const headCell = css`
  padding: 0 6px;
  border-right: 1px solid #dcdee2;
  border-bottom: 1px solid #cfcfcf;
  background: linear-gradient(#fff 45%, #f1f2f4);
  font-weight: normal;
  text-align: left;
  white-space: nowrap;
`;

const PropTable = styled.table`
  width: 100%;
  border-collapse: collapse;
  table-layout: fixed;
  th { ${headCell} height: 24px; }
  th:first-child { width: 101px; }
  td {
    height: 17px;
    padding: 0 6px;
    overflow: hidden;
    line-height: 17px;
    white-space: nowrap;
  }
  th:last-child { overflow: hidden; padding-right: 0; }
  td:last-child { padding-right: 0; }
`;

const ViewsPad = styled.div`
  flex: 1;
  display: flex;
  min-height: 0;
  padding: 4px;
`;

const ViewRow = styled.div`
  display: flex;
  align-items: center;
  white-space: nowrap;
  svg { flex: none; }
`;

const CommentsBody = styled.div`
  flex: 1;
  display: flex;
  min-height: 0;
`;

const CommentsMain = styled.div`
  flex: 1;
  display: flex;
  flex-direction: column;
  min-width: 0;
  padding: 7px 7px 0 3px;
`;

const CommentTable = styled.table`
  width: 100%;
  border: 1px solid #82858c;
  border-spacing: 0;
  table-layout: fixed;
  background: #fff;
  th { ${headCell} height: 24px; }
  th:nth-child(1) { width: 121px; }
  th:nth-child(2) { width: 75px; }
  th:nth-child(3), th:nth-child(4), th:nth-child(5) { width: 100px; }
  th:last-child { border-right: 0; }
  td { height: 20px; padding: 0; }
`;

const CommentText = styled.div`
  flex: 1;
  display: flex;
  margin-top: 9px;
  border: solid #a0a0a0;
  border-width: 1px 0 0;
  textarea {
    flex: 1;
    height: 22px;
    padding: 0;
    border: solid #fff;
    border-width: 1px 0 0 1px;
    background: #f0f0f0;
    resize: none;
    overflow: hidden;
  }
`;

const MiniSpin = styled.div`
  display: flex;
  flex-direction: column;
  width: 16px;
  button { height: 11px; }
`;

const Status = styled.footer`
  position: relative;
  display: flex;
  align-items: center;
  justify-content: flex-end;
  gap: 5px;
  height: 26px;
  padding-right: 4px;
  font: 11px/16px "Liberation Sans", sans-serif;
  color: #111;
`;

const PageBtn = styled.button`
  display: grid;
  fill: #ababab;
  stroke: #8a8a8a;
`;

const PageNo = styled.span`
  margin: 0 10px;
`;

const StatusLine = styled.span`
  width: 1px;
  height: 18px;
  margin: 0 8px 0 24px;
  background: #e4e4e4;
`;

const Meter = styled.span`
  display: flex;
  flex-direction: column;
  width: 30px;
  i {
    height: 7px;
    border: 1px solid #000;
    background: linear-gradient(90deg, #00f ${(p) => p.$value}%, #d4d0d0 0);
  }
`;

const Memory = styled.span`
  font-size: 10px;
  white-space: nowrap;
`;
